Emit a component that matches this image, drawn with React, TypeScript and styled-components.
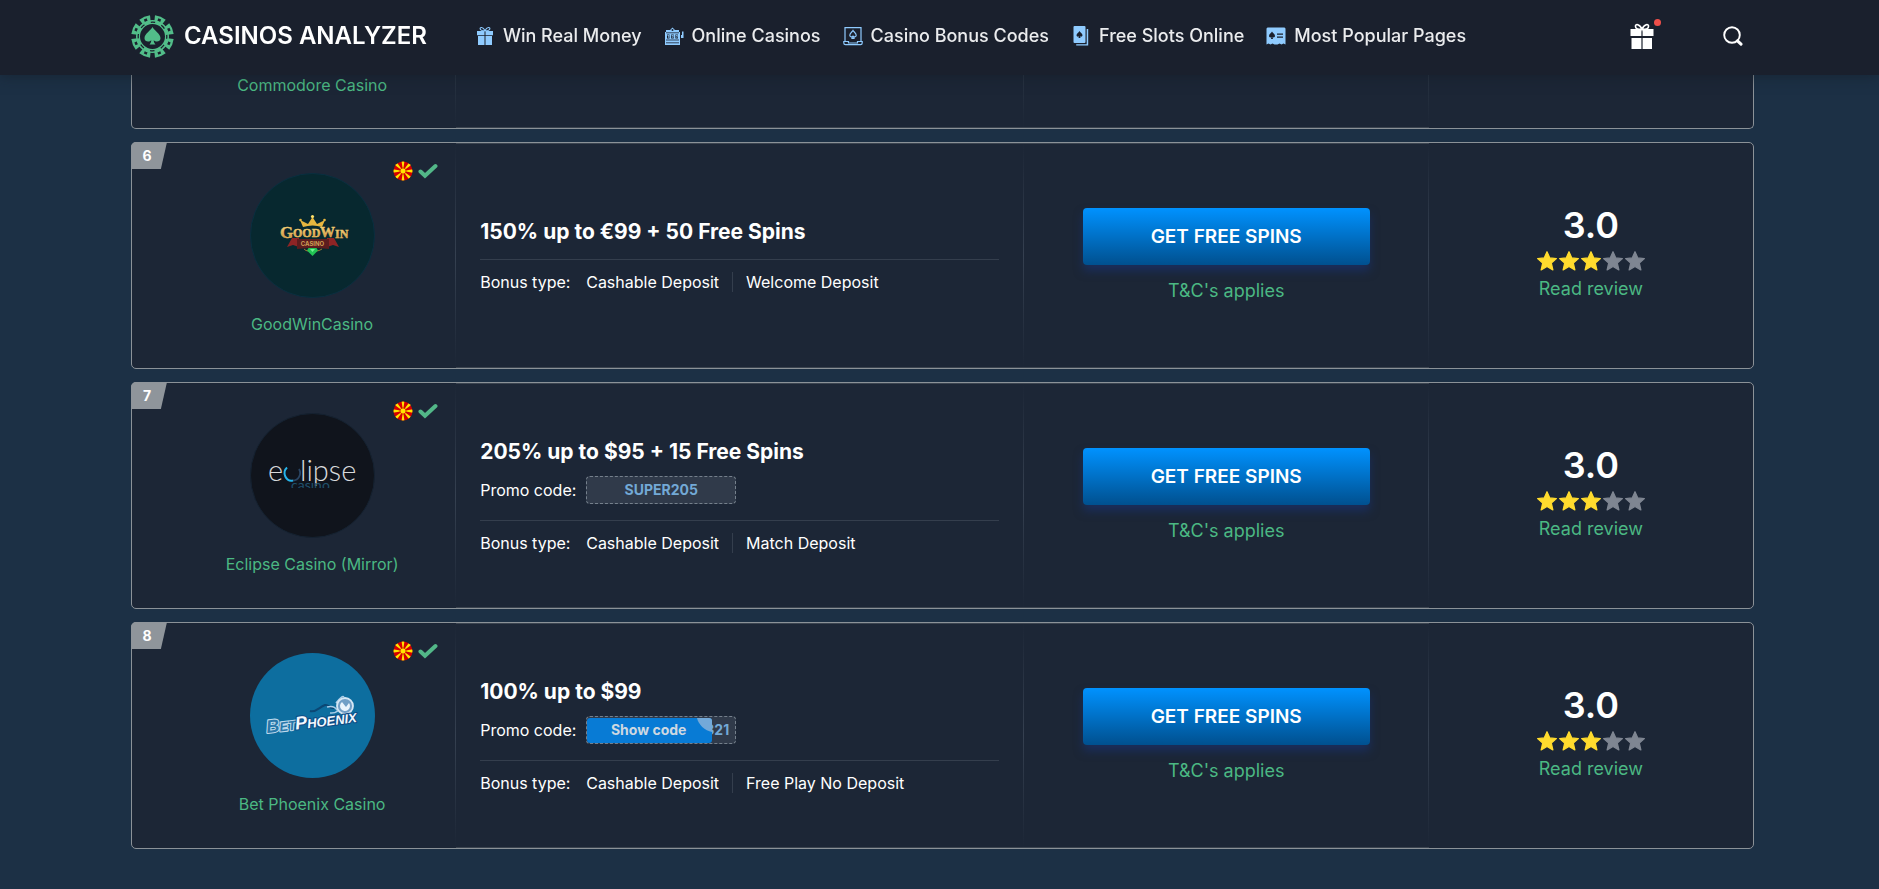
import React from 'react';
import styled, { createGlobalStyle } from 'styled-components';

const GlobalStyle = createGlobalStyle`
  *, *::before, *::after { box-sizing: border-box; }
  body {
    margin: 0;
    background: #1c3045;
    color: #fff;
    font-family: Inter, "Liberation Sans", sans-serif;
    font-size: 16px;
    line-height: 20px;
  }
  a { color: inherit; text-decoration: none; }
  button { border: 0; padding: 0; background: none; color: inherit; font: inherit; cursor: pointer; }
  svg { display: block; flex: none; }
  h2, ul, dl, dt, dd, p { margin: 0; padding: 0; list-style: none; }
`;

const Header = styled.header`
  position: fixed;
  inset: 0 0 auto 0;
  z-index: 10;
  height: 75px;
  padding: 0 136px 3px 131px;
  display: flex;
  align-items: center;
  background: #1a202d;
  box-shadow: 0 2px 12px rgba(20, 28, 38, 0.5);
`;

const Brand = styled.a`
  display: flex;
  align-items: center;
  gap: 10px;
  margin-right: 48px;
  font-size: 24px;
  font-weight: 600;
  line-height: 28px;
  white-space: nowrap;
`;

const NavList = styled.ul`
  display: flex;
  gap: 22px;
`;

const NavLink = styled.a`
  display: flex;
  align-items: center;
  gap: 8px;
  color: #ebecee;
  font-size: 18px;
  font-weight: 500;
  line-height: 24px;
  white-space: nowrap;
`;

const Tools = styled.div`
  display: flex;
  align-items: center;
  gap: 69px;
  margin-left: auto;
`;

const ToolButton = styled.button`
  position: relative;
`;

const Dot = styled.span`
  position: absolute;
  top: -4px;
  right: -7px;
  width: 7px;
  height: 7px;
  border-radius: 50%;
  background: #f04f4a;
`;

const Main = styled.main`
  padding: 75px 125px 40px 131px;
  display: flex;
  flex-direction: column;
  gap: 13px;
`;

const Card = styled.article<{ $tail?: boolean }>`
  position: relative;
  display: grid;
  grid-template-columns: minmax(0, 4fr) minmax(0, 7fr) minmax(0, 5fr) minmax(0, 4fr);
  min-height: ${(p) => (p.$tail ? 54 : 227)}px;
  border: 1px solid #8b9298;
  border-top-width: ${(p) => (p.$tail ? 0 : 1)}px;
  border-radius: ${(p) => (p.$tail ? '0 0 5px 5px' : '5px')};
  background: #1c2636;
`;

const Cell = styled.div<{ $framed?: boolean; $tail?: boolean; $last?: boolean }>`
  display: flex;
  flex-direction: column;
  justify-content: center;
  background: ${(p) =>
    p.$last
      ? 'none'
      : p.$tail
        ? 'linear-gradient(to bottom, #283342, transparent) right / 1px 100% no-repeat'
        : 'linear-gradient(to bottom, transparent, #354050 50%, transparent) right / 1px 100% no-repeat'};
  box-shadow: ${(p) =>
    !p.$framed ? 'none' : p.$tail ? 'inset 0 -1px #3b4450' : 'inset 0 1px #3b4450, inset 0 -1px #3b4450'};
`;

const CasinoCell = styled(Cell)`
  position: relative;
  align-items: center;
  justify-content: ${(p) => (p.$tail ? 'flex-start' : 'center')};
  gap: 14px;
  padding: 0 1px 2px 37px;
`;

const Rank = styled.span`
  position: absolute;
  top: -1px;
  left: -1px;
  z-index: 1;
  width: 36px;
  height: 27px;
  padding-right: 4px;
  border-top-left-radius: 5px;
  background: #8f959b;
  clip-path: polygon(0 0, 100% 0, 83% 100%, 0 100%);
  font-size: 14px;
  font-weight: 700;
  line-height: 27px;
  text-align: center;
`;

const Accepted = styled.div`
  position: absolute;
  top: 18px;
  right: 18px;
  display: flex;
  align-items: center;
  gap: 5px;
`;

const CasinoName = styled.a<{ $tail?: boolean }>`
  color: #4bb883;
  line-height: 24px;
  margin-top: ${(p) => (p.$tail ? -2 : 0)}px;
`;

const OfferCell = styled(Cell)`
  padding: 0 25px 2px 24px;
`;

const OfferTitle = styled.h2`
  font-size: 21px;
  font-weight: 700;
  line-height: 30px;
`;

const PromoRow = styled.div`
  display: grid;
  grid-template-columns: 106px 150px;
  align-items: center;
  margin-top: 9px;
  padding-bottom: 4px;
`;

const CodeBox = styled.button<{ $covered?: boolean }>`
  position: relative;
  height: 28px;
  padding: 0 6px;
  border: 1px dashed #75808c;
  border-radius: 4px;
  background: #303a4a;
  color: #73a9d6;
  font-size: 14px;
  font-weight: 700;
  line-height: 26px;
  text-align: ${(p) => (p.$covered ? 'right' : 'center')};
`;

const CodeCover = styled.span`
  position: absolute;
  inset: 1px 23px 0 0;
  padding-right: 2px;
  border-radius: 3px;
  overflow: hidden;
  background: #087bd5;
  color: #ced8e1;
  line-height: 24px;
  text-align: center;
`;

const Fold = styled.svg`
  position: absolute;
  top: 0;
  right: 0;
`;

const Rule = styled.hr`
  width: 100%;
  height: 1px;
  margin: 12px 0;
  border: 0;
  background: #343e4d;
`;

const BonusRow = styled.dl`
  display: grid;
  grid-template-columns: 106px 1fr;
`;

const BonusTypes = styled.dd`
  display: flex;
`;

const BonusType = styled.span`
  & + & {
    margin-left: 13px;
    padding-left: 13px;
    border-left: 1px solid #343e4d;
  }
`;

const ActionCell = styled(Cell)`
  align-items: center;
  padding: 0 59px;
  gap: 14px;
`;

const PlayButton = styled.button`
  width: 100%;
  height: 57px;
  border-radius: 4px;
  background: linear-gradient(to bottom, #0092ff, #00508f);
  box-shadow: 0 6px 10px rgba(24, 54, 132, 0.5);
  font-size: 19px;
  font-weight: 600;
`;

const GreenLink = styled.a`
  color: #4bb883;
  font-size: 18px;
  line-height: 24px;
`;

const RatingCell = styled(Cell)`
  align-items: center;
`;

const Score = styled.p`
  font-size: 36px;
  font-weight: 600;
  line-height: 30px;
`;

const Stars = styled.div`
  display: flex;
  gap: 2px;
  margin: 11px 0 6px;
`;

const SPADE =
  'M8 0C9.5 3.5 16 6.5 16 11.2C16 14.6 11.6 15.6 9.2 13.2C9.3 15 9.8 16.2 11 17.5H5C6.2 16.2 6.7 15 6.8 13.2C4.4 15.6 0 14.6 0 11.2C0 6.5 6.5 3.5 8 0Z';

const ChipLogo = () => (
  <svg width="43" height="43" viewBox="-21.5 -21.5 43 43" aria-hidden="true">
    <g fill="#52bd89">
      {[0, 1, 2, 3, 4, 5, 6, 7].map((i) => (
        <g key={i} transform={`rotate(${22.5 + i * 45})`}>
          <path d="M-5.8 -20.5A21.3 21.3 0 0 1 5.8 -20.5L4 -14.5H-4Z" />
          <rect x="-1.5" y="-19" width="3" height="3" fill="#1a202d" />
        </g>
      ))}
    </g>
    <circle r="14.5" fill="none" stroke="#52bd89" strokeWidth="4" />
    <circle r="14.3" fill="none" stroke="#1a202d" strokeWidth="1.3" strokeDasharray="4.5 6.73" strokeDashoffset="2.2" />
    <path d={SPADE} transform="translate(-8 -9.5)" fill="#52bd89" />
  </svg>
);

const BLUE = '#8fcbff';
const INK = '#1a202d';

const GiftSmall = () => (
  <svg width="20" height="20" viewBox="0 0 20 20" aria-hidden="true">
    <path
      d="M10 4.8C8 0.5 4.5 1 5.2 3.2C5.6 4.5 8 4.8 10 4.8C12 4.8 14.4 4.5 14.8 3.2C15.5 1 12 0.5 10 4.8Z"
      fill="none"
      stroke={BLUE}
      strokeWidth="1.1"
    />
    <path d="M2 5H9.5V9.2H2ZM10.5 5H18V9.2H10.5ZM3 10H9.5V19H3ZM10.5 10H17V19H10.5Z" fill={BLUE} />
  </svg>
);

const SlotIcon = () => (
  <svg width="20" height="20" viewBox="0 0 20 20" aria-hidden="true">
    <path d="M2 4H6L8.5 1.5L11 4H15V6H16V19H1V6H2Z" fill={BLUE} />
    <path d="M17 9H18V5.500H19.5V12H17Z" fill={BLUE} />
    <path d="M2 6.8H15M2 14H15M2 16.8H15" stroke={INK} strokeWidth="0.8" />
    <path d="M3 8.500H5.5V12.500H3ZM7.2 8.500H9.7V12.500H7.2ZM11.4 8.500H13.9V12.500H11.4Z" fill={INK} />
    <path d="M3.500 9.500H5L4.3 11.8M7.700 9.500H9.2L8.5 11.8M11.900 9.500H13.4L12.7 11.8" stroke={BLUE} strokeWidth="0.8" fill="none" />
    <circle cx="8.5" cy="4" r="1" fill={INK} />
  </svg>
);

const ScrollIcon = () => (
  <svg width="20" height="20" viewBox="0 0 20 20" aria-hidden="true" fill="none" stroke={BLUE} strokeWidth="1.2">
    <path d="M2 15V1.700H18V15M0.800 15.500H5.5V17H14.5V15.500H19.200V17C19.200 18 18.5 18.600 17.5 18.600H2.5C1.500 18.600 0.800 18 0.800 17Z" />
    <path d="M10 4.5C10.8 6 13.2 7 13.2 9.2C13.2 11 11.2 11.2 10.6 10.6L11 12.3H9L9.4 10.6C8.8 11.2 6.8 11 6.8 9.2C6.8 7 9.2 6 10 4.5Z" />
  </svg>
);

const CardsIcon = () => (
  <svg width="20" height="20" viewBox="0 0 20 20" aria-hidden="true">
    <rect x="2.5" y="0" width="12" height="17" rx="1" fill={BLUE} />
    <path d="M15.700 3H17.200V19.500H5.2V18.200H15.700Z" fill={BLUE} />
    <path d="M8.5 5C9 6.3 11.5 7.3 11.5 9.3C11.5 10.8 9.8 11 9.1 10.3L9.5 12H7.5L7.9 10.3C7.2 11 5.5 10.8 5.5 9.3C5.5 7.3 8 6.3 8.5 5Z" fill={INK} />
  </svg>
);

const TicketIcon = () => (
  <svg width="20" height="20" viewBox="0 0 20 20" aria-hidden="true">
    <path d="M1.5 1.5H18.5L19.5 2.5V18.5L17.5 17.5L15.5 18.5L13.5 17.5L11.5 18.5H8.5L6.5 17.5L4.5 18.5L2.5 17.5L0.5 18.5V2.5Z" fill={BLUE} />
    <path d="M6 5.5C6.5 7 9 7.8 9 10C9 11.5 7.3 11.7 6.6 11L7 13H5L5.4 11C4.7 11.7 3 11.5 3 10C3 7.8 5.5 7 6 5.5ZM11 7.5H17V8.8H11ZM11 10.5H17V11.8H11Z" fill={INK} />
  </svg>
);

const GiftLarge = () => (
  <svg width="24" height="27" viewBox="0 0 24 27" aria-hidden="true">
    <path
      d="M12 6.5C10 1 5 0.5 5.5 3.5C5.5 5.5 8 6.5 12 6.5C16 6.5 18.5 5.5 18.5 3.5C19 0.5 14 1 12 6.5Z"
      fill="none"
      stroke="#fff"
      strokeWidth="1.6"
    />
    <path d="M0.5 6H11.4V13H0.5ZM12.6 6H23.5V13H12.6ZM1.5 15H11.4V26H1.5ZM12.6 15H22V26H12.6Z" fill="#fff" />
  </svg>
);

const SearchIcon = () => (
  <svg width="20" height="20" viewBox="0 0 20 20" aria-hidden="true" fill="none" stroke="#fff">
    <circle cx="9" cy="9" r="7.8" strokeWidth="1.9" />
    <path d="M14.5 14.8L18 18.2" strokeWidth="3" strokeLinecap="round" />
  </svg>
);

const Flag = () => (
  <svg width="20" height="20" viewBox="-10 -10 20 20" role="img" aria-label="North Macedonia">
    <clipPath id="flag-round">
      <circle r="9.5" />
    </clipPath>
    <g clipPath="url(#flag-round)">
      <rect x="-10" y="-10" width="20" height="20" fill="#d40000" />
      <path
        d="M-1.5 -10H1.5L0 0ZM-1.5 10H1.5L0 0ZM-10 -1.700V1.700L0 0ZM10 -1.700V1.700L0 0ZM-9 -6.500L-6.5 -9L0 0ZM9 -6.500L6.5 -9L0 0ZM-9 6.500L-6.5 9L0 0ZM9 6.500L6.5 9L0 0Z"
        fill="#ffe600"
      />
      <circle r="3" fill="#ffe600" stroke="#d40000" strokeWidth="0.7" />
    </g>
  </svg>
);

const Check = () => (
  <svg width="20" height="16" viewBox="0 0 20 16" role="img" aria-label="Accepted">
    <path d="M2.5 8.5L7 12.8L17.5 3" fill="none" stroke="#52b788" strokeWidth="4" strokeLinecap="round" />
  </svg>
);

const Star = ({ on }: { on: boolean }) => (
  <svg width="20" height="20" viewBox="0.3 0.3 19.4 19.4" aria-hidden="true">
    <path
      d="M10 1L12.700 7L19.1 7.7L14.2 12L15.7 18.7L10 15.3L4.3 18.7L5.8 12L0.9 7.7L7.3 7Z"
      fill={on ? '#ffdb2e' : '#7f8692'}
      stroke={on ? '#ffdb2e' : '#7f8692'}
      strokeWidth="1.2"
      strokeLinejoin="round"
    />
  </svg>
);

const GoodWinLogo = () => (
  <svg width="125" height="125" viewBox="0 0 125 125" role="img" aria-label="GoodWin Casino logo">
    <defs>
      <linearGradient id="gold" x1="0" y1="0" x2="0" y2="1">
        <stop offset="0" stopColor="#fbe48d" />
        <stop offset="1" stopColor="#c8812f" />
      </linearGradient>
    </defs>
    <circle cx="62.5" cy="62.5" r="62" fill="#07282f" stroke="#0a2f40" />
    <path d="M53 54L50 47L58 51L62.500 44L67 51L75 47L72 54Q62.5 51 53 54Z" fill="#e7b63f" />
    <circle cx="62.5" cy="43.5" r="1.6" fill="#ffe26b" />
    <circle cx="50.5" cy="47" r="1.3" fill="#e7b63f" />
    <circle cx="74.5" cy="47" r="1.3" fill="#e7b63f" />
    <path d="M37 74L42 65H49V74L43 72ZM89 74L84 65H77V74L83 72Z" fill="#8e2425" />
    <path d="M47 66H79V76Q63 74 47 76Z" fill="#5c1c1e" />
    <g fontFamily="Liberation Serif, serif" fontWeight="700" fill="url(#gold)" stroke="#f0c767" strokeWidth="0.4">
      <text x="30" y="65" fontSize="17">G</text>
      <text x="43" y="64" fontSize="12">OOD</text>
      <text x="70" y="64" fontSize="15">W</text>
      <text x="85" y="65" fontSize="12">IN</text>
    </g>
    <text x="62.5" y="73" fontSize="6" fontWeight="700" fill="#cf9f55" textAnchor="middle">CASINO</text>
    <path d="M54 76Q58 80 62 76Q66 80 72 76" fill="none" stroke="#9c7a35" />
    <path d="M58.5 75H66.5L68 77.5L62.5 83L57 77.5Z" fill="#22c354" />
    <path d="M60 76H65L62.5 79Z" fill="#72f493" />
  </svg>
);

const EclipseLogo = () => (
  <svg width="125" height="125" viewBox="0 0 125 125" role="img" aria-label="Eclipse Casino logo">
    <circle cx="62.5" cy="62.5" r="62" fill="#10141c" stroke="#152231" />
    <g fontFamily="Lato, sans-serif" fontWeight="300" fontSize="29" fill="#d7d9db">
      <text x="18" y="68">e</text>
      <text x="50" y="68">lipse</text>
    </g>
    <path d="M37 54.500A7 7.5 0 0 0 43 67.5" fill="none" stroke="#27b4ea" strokeWidth="2" />
    <path d="M43 67.5A7 7.5 0 0 0 49 56" fill="none" stroke="#2a4563" strokeWidth="1.8" />
    <clipPath id="reflection">
      <rect x="38" y="69" width="50" height="6" />
    </clipPath>
    <text x="41" y="77" fontFamily="Lato, sans-serif" fontSize="14" fill="#1f506b" clipPath="url(#reflection)">
      casino
    </text>
  </svg>
);

const PhoenixLogo = () => (
  <svg width="125" height="125" viewBox="0 0 125 125" role="img" aria-label="Bet Phoenix logo">
    <circle cx="62.5" cy="62.5" r="62.5" fill="#0d6e9f" />
    <path d="M60 58C66 60 69 54 75 52C79 51 79 56 84 55" fill="none" stroke="#0b4774" strokeWidth="2" />
    <path d="M77 54Q84 52 87 57M80 60Q88 61 92 52M86 50Q92 42 94 44" fill="none" stroke="#a9cde8" strokeWidth="1.5" />
    <circle cx="95" cy="53" r="8" fill="#719fc6" stroke="#d5e7f5" strokeWidth="1.8" />
    <path d="M92 49A5 5 0 1 0 99 50L96 54Z" fill="#eaf4fc" />
    <g
      transform="rotate(-7 18 80)"
      fontFamily="Liberation Sans, sans-serif"
      fontStyle="italic"
      fontWeight="700"
      strokeLinejoin="round"
      paintOrder="stroke"
      strokeWidth="2.2"
    >
      <g fill="#2877a9" stroke="#bcd9ec">
        <text x="17" y="80" fontSize="18">B</text>
        <text x="30" y="80" fontSize="13">ET</text>
      </g>
      <g fill="#f2f8fd" stroke="#0d4d86">
        <text x="46" y="80" fontSize="18">P</text>
        <text x="58" y="80" fontSize="13">HOENIX</text>
      </g>
    </g>
  </svg>
);

const NAV = [
  { label: 'Win Real Money', Icon: GiftSmall },
  { label: 'Online Casinos', Icon: SlotIcon },
  { label: 'Casino Bonus Codes', Icon: ScrollIcon },
  { label: 'Free Slots Online', Icon: CardsIcon },
  { label: 'Most Popular Pages', Icon: TicketIcon },
];

interface Offer {
  rank: number;
  name: string;
  title: string;
  code?: string;
  covered?: boolean;
  types: string[];
  Logo: React.ComponentType;
}

const OFFERS: Offer[] = [
  { rank: 6, name: 'GoodWinCasino', title: '150% up to €99 + 50 Free Spins', types: ['Cashable Deposit', 'Welcome Deposit'], Logo: GoodWinLogo },
  { rank: 7, name: 'Eclipse Casino (Mirror)', title: '205% up to $95 + 15 Free Spins', code: 'SUPER205', types: ['Cashable Deposit', 'Match Deposit'], Logo: EclipseLogo },
  { rank: 8, name: 'Bet Phoenix Casino', title: '100% up to $99', code: '321', covered: true, types: ['Cashable Deposit', 'Free Play No Deposit'], Logo: PhoenixLogo },
];

const OfferCard = ({ rank, name, title, code, covered, types, Logo }: Offer) => (
  <Card>
    <Rank>{rank}</Rank>
    <CasinoCell>
      <Accepted>
        <Flag />
        <Check />
      </Accepted>
      <Logo />
      <CasinoName href="#">{name}</CasinoName>
    </CasinoCell>
    <OfferCell $framed>
      <OfferTitle>{title}</OfferTitle>
      {code && (
        <PromoRow>
          <span>Promo code:</span>
          <CodeBox type="button" $covered={covered}>
            {code}
            {covered && (
              <CodeCover>
                Show code
                <Fold width="15" height="14" viewBox="0 0 15 14" aria-hidden="true">
                  <path d="M0 0H15V14C8 13 1 6 0 0Z" fill="#73a9d9" />
                </Fold>
              </CodeCover>
            )}
          </CodeBox>
        </PromoRow>
      )}
      <Rule />
      <BonusRow>
        <dt>Bonus type:</dt>
        <BonusTypes>
          {types.map((t) => (
            <BonusType key={t}>{t}</BonusType>
          ))}
        </BonusTypes>
      </BonusRow>
    </OfferCell>
    <ActionCell $framed>
      <PlayButton type="button">GET FREE SPINS</PlayButton>
      <GreenLink href="#">T&amp;C's applies</GreenLink>
    </ActionCell>
    <RatingCell $last>
      <Score>3.0</Score>
      <Stars role="img" aria-label="3 out of 5 stars">
        {[1, 2, 3, 4, 5].map((n) => (
          <Star key={n} on={n <= 3} />
        ))}
      </Stars>
      <GreenLink href="#">Read review</GreenLink>
    </RatingCell>
  </Card>
);

export default function App() {
  return (
    <>
      <GlobalStyle />
      <Header>
        <Brand href="#">
          <ChipLogo />
          CASINOS ANALYZER
        </Brand>
        <nav>
          <NavList>
            {NAV.map(({ label, Icon }) => (
              <li key={label}>
                <NavLink href="#">
                  <Icon />
                  {label}
                </NavLink>
              </li>
            ))}
          </NavList>
        </nav>
        <Tools>
          <ToolButton type="button" aria-label="Bonuses">
            <GiftLarge />
            <Dot />
          </ToolButton>
          <ToolButton type="button" aria-label="Search">
            <SearchIcon />
          </ToolButton>
        </Tools>
      </Header>
      <Main>
        <Card $tail>
          <CasinoCell $tail>
            <CasinoName $tail href="#">
              Commodore Casino
            </CasinoName>
          </CasinoCell>
          <Cell $framed $tail />
          <Cell $framed $tail />
          <Cell $last />
        </Card>
        {OFFERS.map((offer) => (
          <OfferCard key={offer.rank} {...offer} />
        ))}
      </Main>
    </>
  );
}
